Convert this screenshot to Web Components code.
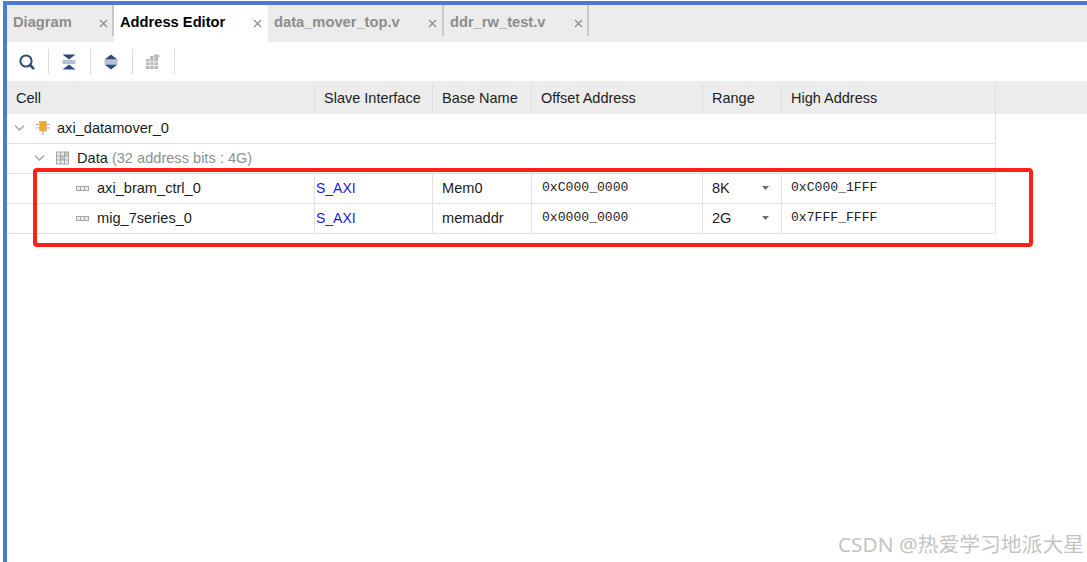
<!DOCTYPE html>
<html>
<head>
<meta charset="utf-8">
<style>
  html, body { margin: 0; background: #fff; }
  body { font-family: "Liberation Sans", Arial, sans-serif; font-size: 14.6px; color: #1c1c1c; overflow: hidden; }
</style>
</head>
<body>
<editor-frame>
  <tab-bar>
    <editor-tab width="107" sep>Diagram</editor-tab>
    <editor-tab width="154" active>Address Editor</editor-tab>
    <editor-tab width="176" close-pad="5" sep>data_mover_top.v</editor-tab>
    <editor-tab width="145" sep>ddr_rw_test.v</editor-tab>
  </tab-bar>
  <tool-bar>
    <tool-button>
      <svg width="18" height="18" viewBox="0 0 18 18"><circle cx="8" cy="8" r="5.6" fill="none" stroke="#2f4b7c" stroke-width="2"/><path d="M12 12l3.4 3.4" stroke="#2f4b7c" stroke-width="2.6" stroke-linecap="round"/></svg>
    </tool-button>
    <tool-button>
      <svg width="18" height="18" viewBox="0 0 18 18"><path d="M2.500 1.500h13L9 6.500z M9 11.500l6.500 5h-13z" fill="#2f4b7c"/><path d="M2.500 8h13M2.500 10h13" stroke="#6f83a6" stroke-width="1"/></svg>
    </tool-button>
    <tool-button>
      <svg width="18" height="18" viewBox="0 0 18 18"><path d="M9 1.500l6.500 5h-13z M2.500 11.500h13L9 16.500z" fill="#2f4b7c"/><path d="M2.500 8h13M2.500 10h13" stroke="#6f83a6" stroke-width="1"/></svg>
    </tool-button>
    <tool-button>
      <svg width="18" height="18" viewBox="0 0 18 18"><path d="M2 6h4V3h4V1.500h4l2 2-2 1V16H2z" fill="#b9b9b9"/><path d="M2 9h12M2 12.500h12M6 6v10M10 3v13" stroke="#f0f0f0" stroke-width="1"/></svg>
    </tool-button>
  </tool-bar>
  <address-table>
    <tree-row level="0" icon="chip">axi_datamover_0</tree-row>
    <tree-row level="1" icon="grid">Data <span style="color:#8f8f8f">(32 address bits : 4G)</span></tree-row>
    <segment-row cell="axi_bram_ctrl_0" iface="S_AXI" base="Mem0" offset="0xC000_0000" range="8K" high="0xC000_1FFF"></segment-row>
    <segment-row cell="mig_7series_0" iface="S_AXI" base="memaddr" offset="0x0000_0000" range="2G" high="0x7FFF_FFFF"></segment-row>
  </address-table>
  <red-mark></red-mark>
  <water-mark>CSDN @热爱学习地派大星</water-mark>
</editor-frame>

<script>
const COLS = "308px 118px 99px 171px 79px 214px";

class EditorFrame extends HTMLElement {
  constructor() {
    super();
    this.attachShadow({ mode: "open" });
    this.shadowRoot.innerHTML = `
      <style>
        :host { display: block; position: relative; height: 561px; margin-top: 1px; margin-left: 3px;
          border-top: 4px solid #4a7bd0; border-left: 4px solid #4a7bd0; }
      </style>
      <slot></slot>`;
  }
}

class TabBar extends HTMLElement {
  constructor() {
    super();
    this.attachShadow({ mode: "open" });
    this.shadowRoot.innerHTML = `
      <style>
        :host { display: flex; height: 37px; background: #ececec; }
      </style>
      <slot></slot>`;
  }
}

class EditorTab extends HTMLElement {
  constructor() {
    super();
    this.attachShadow({ mode: "open" });
  }

  connectedCallback() {
    const active = this.hasAttribute("active");
    const sep = this.hasAttribute("sep");
    const pad = this.getAttribute("close-pad") || (sep ? 4 : 6);
    this.shadowRoot.innerHTML = `
      <style>
        :host { display: flex; box-sizing: border-box; width: ${this.getAttribute("width")}px; height: ${active ? 37 : 31}px;
          padding: 0 ${pad}px ${active ? 6 : 0}px 6px; align-items: center; justify-content: space-between;
          font-weight: bold; font-size: 14.7px; color: ${active ? "#000" : "#8c8c8c"};
          background: ${active ? "#fff" : "transparent"};
          border-right: ${sep ? "2px solid #c9c9c9" : "0"}; }
        span { margin-top: 2px; }
        svg { margin-top: 6px; }
      </style>
      <span><slot></slot></span>
      <svg width="9" height="9" viewBox="0 0 9 9"><path d="M1 1l7 7M8 1L1 8" stroke="#8a8a8a" stroke-width="1.200"/></svg>`;
  }
}

class ToolBar extends HTMLElement {
  constructor() {
    super();
    this.attachShadow({ mode: "open" });
    this.shadowRoot.innerHTML = `
      <style>
        :host { display: flex; height: 39px; box-sizing: border-box; padding: 7px 0; background: #fff; }
      </style>
      <slot></slot>`;
  }
}

class ToolButton extends HTMLElement {
  constructor() {
    super();
    this.attachShadow({ mode: "open" });
    this.shadowRoot.innerHTML = `
      <style>
        :host { display: flex; box-sizing: border-box; width: 42px; height: 25px; padding-right: 2px;
          align-items: center; justify-content: center; border-right: 1px solid #dcdcdc; }
      </style>
      <slot></slot>`;
  }
}

class AddressTable extends HTMLElement {
  constructor() {
    super();
    this.attachShadow({ mode: "open" });
    const heads = ["Cell", "Slave Interface", "Base Name", "Offset Address", "Range", "High Address"];
    this.shadowRoot.innerHTML = `
      <style>
        :host { display: block; }
        .head { display: grid; grid-template-columns: ${COLS}; height: 33px; box-sizing: border-box;
          padding-top: 3px; background: #ececec; font-size: 14.5px; }
        .head div { box-sizing: border-box; padding-left: 9px; line-height: 28px; padding-bottom: 2px; border-right: 1px solid #dedede; }
        .rows { width: 989px; }
      </style>
      <div class="head">${heads.map((h) => `<div>${h}</div>`).join("")}</div>
      <div class="rows"><slot></slot></div>`;
  }
}

const ROW_ICONS = {
  chip: `<svg width="14" height="14" viewBox="0 0 14 14"><path d="M0 3.500h14M0 7h14M7 10v4" stroke="#b0b0b0" stroke-width="1.200"/><rect x="3.500" y=".5" width="7" height="9.500" fill="#f5a623" stroke="#c9c2a8"/></svg>`,
  grid: `<svg width="14" height="14" viewBox="0 0 14 14"><rect width="13" height="13" y=".5" fill="#a6a6a6"/><path d="M1 1.500h3v3H1zM5 1.500h3v3H5zM9 5.500h3v3H9zM1 9.500h3v3H1zM5 9.500h3v3H5zM9 9.500h3v3H9zM1 5.500h3v3H1z" fill="#eaeaea"/><path d="M9 1.500h3v3H9zM5 5.500h3v3H5z" fill="#c9c9c9"/></svg>`,
};

class TreeRow extends HTMLElement {
  constructor() {
    super();
    this.attachShadow({ mode: "open" });
  }

  connectedCallback() {
    const level = Number(this.getAttribute("level"));
    this.shadowRoot.innerHTML = `
      <style>
        :host { display: flex; box-sizing: border-box; height: 30px; align-items: center;
          padding: 0 0 1px ${7 + level * 20}px; border-bottom: 1px solid #e2e2e2; border-right: 1px solid #e2e2e2; }
        .chev { width: 11px; margin-right: 11px; display: flex; }
        .icon { width: 14px; height: 14px; margin-right: 7px; display: flex; }
      </style>
      <span class="chev"><svg width="11" height="8" viewBox="0 0 11 8"><path d="M1 1.500L5.500 6 10 1.500" fill="none" stroke="#a2a2a2" stroke-width="1.300"/></svg></span>
      <span class="icon">${ROW_ICONS[this.getAttribute("icon")]}</span>
      <span><slot></slot></span>`;
  }
}

class SegmentRow extends HTMLElement {
  constructor() {
    super();
    this.attachShadow({ mode: "open" });
  }

  connectedCallback() {
    const a = (n) => this.getAttribute(n);
    this.shadowRoot.innerHTML = `
      <style>
        :host { display: grid; grid-template-columns: ${COLS}; height: 30px; box-sizing: border-box; border-bottom: 1px solid #e2e2e2; }
        .c { box-sizing: border-box; display: flex; align-items: center; padding: 0 0 1px 9px; border-right: 1px solid #e2e2e2; }
        .cell { padding-left: 69px; }
        .cell svg { margin-right: 8px; }
        .iface { padding-left: 1px; color: #1a1ae6; font-size: 14px; }
        .mono { font-family: "Liberation Mono", monospace; font-size: 13.1px; color: #222; padding-bottom: 3px; padding-left: 10px; }
        .range { justify-content: space-between; padding-right: 12px; }
        .high { padding-left: 9px; }
      </style>
      <div class="c cell"><svg width="13" height="5" viewBox="0 0 13 5"><rect width="13" height="5" fill="#a8a8a8"/><path d="M1 1h3v3H1zM5 1h3v3H5zM9 1h3v3H9z" fill="#ececec"/></svg>${a("cell")}</div>
      <div class="c iface">${a("iface")}</div>
      <div class="c">${a("base")}</div>
      <div class="c mono">${a("offset")}</div>
      <div class="c range">${a("range")}<svg width="7" height="4" viewBox="0 0 7 4"><path d="M0 0h7L3.500 4z" fill="#6e6e6e"/></svg></div>
      <div class="c mono high">${a("high")}</div>`;
  }
}

class RedMark extends HTMLElement {
  constructor() {
    super();
    this.attachShadow({ mode: "open" });
    this.shadowRoot.innerHTML = `
      <style>
        :host { position: absolute; left: 26px; top: 163px; width: 992px; height: 71px;
          border: 4px solid #ff2116; border-radius: 4px; pointer-events: none; }
      </style>`;
  }
}

class WaterMark extends HTMLElement {
  constructor() {
    super();
    this.attachShadow({ mode: "open" });
    this.shadowRoot.innerHTML = `
      <style>
        :host { position: absolute; right: 3px; top: 524px; font: 20.800px/30px "Noto Sans", "Noto Sans CJK SC", sans-serif;
          color: #c4c4c4; white-space: nowrap; }
      </style>
      <slot></slot>`;
  }
}

customElements.define("editor-frame", EditorFrame);
customElements.define("tab-bar", TabBar);
customElements.define("editor-tab", EditorTab);
customElements.define("tool-bar", ToolBar);
customElements.define("tool-button", ToolButton);
customElements.define("address-table", AddressTable);
customElements.define("tree-row", TreeRow);
customElements.define("segment-row", SegmentRow);
customElements.define("red-mark", RedMark);
customElements.define("water-mark", WaterMark);
</script>
</body>
</html>
